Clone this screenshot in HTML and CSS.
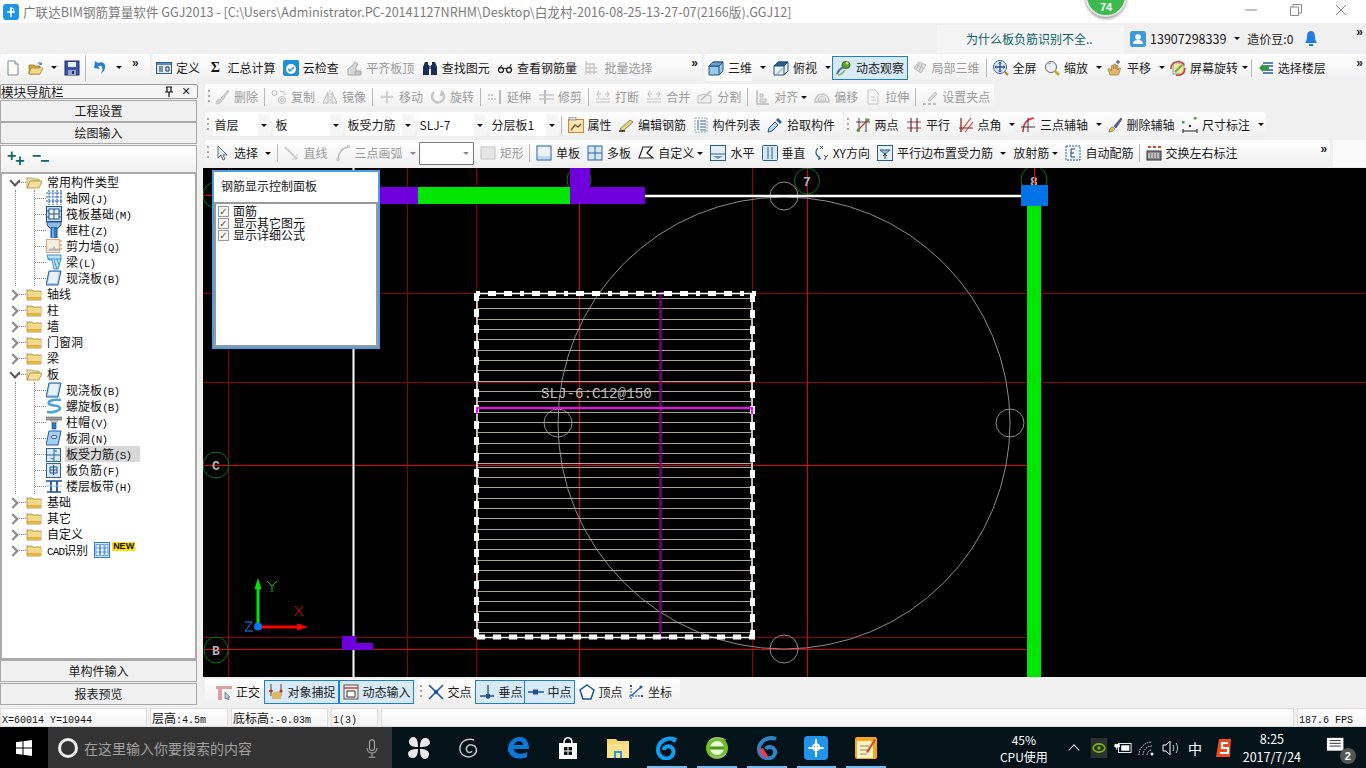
FILE: index.html
```html
<!DOCTYPE html>
<html lang="zh-CN">
<head>
<meta charset="utf-8">
<title>广联达BIM钢筋算量软件 GGJ2013</title>
<link rel="stylesheet" href="styles.css">
</head>
<body>
<svg class="defs" width="0" height="0" aria-hidden="true">
<symbol id="new" viewBox="0 0 16 16"><path d="M3 1h7l3 3v11H3z" fill="#fdfdf5" stroke="#7d8a9a"/><path d="M10 1v3h3" fill="#dfe6ee" stroke="#7d8a9a"/></symbol>
<symbol id="open" viewBox="0 0 16 16"><path d="M1 5h5l1 1h5v8H1z" fill="#d9a53e" stroke="#8a6a20" stroke-width=".7"/><path d="M3 8h12l-3 6H1z" fill="#f5d98a" stroke="#a5822f" stroke-width=".7"/><path d="M9 4c1-2 3-2 4-1l1-1v3h-3l1-1c-1-.6-2-.5-3 0z" fill="#5a86b8"/></symbol>
<symbol id="save" viewBox="0 0 16 16"><rect x="1" y="1" width="14" height="14" fill="#3d55a8" stroke="#1d2f70"/><rect x="4" y="2" width="8" height="5" fill="#e8edf6"/><rect x="4" y="10" width="8" height="5" fill="#9aa6c6"/><rect x="8" y="11" width="2" height="3" fill="#1d2f70"/></symbol>
<symbol id="undo" viewBox="0 0 16 16"><path d="M5 3c5-2 8 1 7 5-.5 2.500-2 4-4 6 1-3 2-5 1-7-.8-1.400-2.500-1.500-4-.6L7 9 1 8l1-7z" fill="#2f7fd0"/></symbol>
<symbol id="define" viewBox="0 0 16 16"><rect x=".5" y="2.500" width="15" height="11" fill="#dfe8f2" stroke="#2e5f92"/><rect x="1" y="3" width="14" height="2" fill="#5a8cc0"/><path d="M3 7h4M3 9h4M3 11h4M10 7h3v4h-3z" fill="none" stroke="#234"/></symbol>
<symbol id="cloudok" viewBox="0 0 16 16"><rect width="16" height="16" rx="2" fill="#1f8fdc"/><circle cx="8" cy="9" r="5" fill="#fff"/><path d="M5 9l2 2 4-4" fill="none" stroke="#1f8fdc" stroke-width="1.500"/></symbol>
<symbol id="align" viewBox="0 0 16 16"><path d="M2 15V9l5-4 2-3 3 2-2 3v8z" fill="#d8d8d8" stroke="#aaa"/><path d="M9 11h6v4H9z" fill="#c4c4c4" stroke="#aaa"/></symbol>
<symbol id="binoc" viewBox="0 0 16 16"><path d="M3 2h3v3h1v10H1V7zM13 2h-3v3H9v10h6V7z" fill="#1c2c5a"/><path d="M7 6h2v3H7z" fill="#6a7aa0"/></symbol>
<symbol id="glass" viewBox="0 0 16 16"><circle cx="4" cy="10" r="2.500" fill="none" stroke="#222" stroke-width="1.300"/><circle cx="12" cy="10" r="2.500" fill="none" stroke="#222" stroke-width="1.300"/><path d="M6 9c1-1 3-1 4 0M1.500 9L5 5M13 7l1-3" fill="none" stroke="#222"/></symbol>
<symbol id="batch" viewBox="0 0 16 16"><path d="M2 1v14M2 4h9M2 8h11M2 12h11M6 4v10M10 4v10" fill="none" stroke="#c6c6c6" stroke-width="1.300"/></symbol>
<symbol id="cube" viewBox="0 0 16 16"><path d="M1 6l4-4h10v9l-4 4H1z" fill="#9cc8ea" stroke="#234f7c"/><path d="M1 6h10v9M11 6l4-4" fill="none" stroke="#234f7c"/><path d="M1 6l4-4h10l-4 4z" fill="#66a2d4" stroke="#234f7c"/></symbol>
<symbol id="cubetop" viewBox="0 0 16 16"><path d="M1 6l4-4h10v9l-4 4H1z" fill="#eef5fb" stroke="#234f7c"/><path d="M1 6l4-4h10l-4 4z" fill="#2d5c92" stroke="#234f7c"/><path d="M11 6v9" stroke="#234f7c"/><path d="M4 14l6-6" stroke="#a5c8e6" stroke-width="2"/></symbol>
<symbol id="orbit" viewBox="0 0 16 16"><ellipse cx="10" cy="5" rx="4" ry="3.500" fill="#5aa02c" stroke="#2e6a10"/><circle cx="11" cy="3" r="1.500" fill="#e8f050"/><path d="M1 14C3 9 5 8 8 7" fill="none" stroke="#507090" stroke-width="2"/><path d="M2 15c3 0 5-2 7-5" fill="none" stroke="#8ab26a" stroke-width="1.500"/></symbol>
<symbol id="local3d" viewBox="0 0 16 16"><path d="M2 8l5-6 7 3-5 8z" fill="#dcdcdc" stroke="#bbb"/><path d="M5 5l6 3M7 3l-3 7M10 4l-3 7" stroke="#bbb" fill="none"/></symbol>
<symbol id="full" viewBox="0 0 16 16"><circle cx="7" cy="7" r="6.500" fill="#dfe8f4" stroke="#3a5f94"/><path d="M7 2v10M2 7h10" stroke="#234f92" stroke-width="1.300"/><path d="M5.500 3.500L7 2l1.500 1.500M5.500 10.500L7 12l1.500-1.500M3.500 5.500L2 7l1.500 1.500M10.500 5.500L12 7l-1.500 1.500" fill="none" stroke="#234f92"/><path d="M12 12l3 3" stroke="#d07010" stroke-width="2"/></symbol>
<symbol id="zoomi" viewBox="0 0 16 16"><circle cx="7" cy="7" r="5.500" fill="#edf2f7" stroke="#667"/><path d="M11 11l4 4" stroke="#d0a020" stroke-width="2.500"/><path d="M4 4l3-1" stroke="#99a" /></symbol>
<symbol id="pan" viewBox="0 0 16 16"><path d="M3 15L1 9l2-.5L4.500 11V5.500l1.500-.5.500 4 .5-5 1.500 0 .5 5 .5-4 1.500.5V10l1-2 1.500.5-1.500 5-1 1.500z" fill="#e2b767" stroke="#8c6a2a" stroke-width=".6"/><path d="M11 0v4M9 2h4" stroke="#345"/></symbol>
<symbol id="rotscr" viewBox="0 0 16 16"><rect x="3" y="3" width="11" height="11" fill="#f3e89a" stroke="#6a9fd0"/><path d="M5 12l7-7" stroke="#6aa84a" stroke-width="2"/><path d="M1 9a7 7 0 0 1 13-4M15 8a7 7 0 0 1-9 7" fill="none" stroke="#d83a2a" stroke-width="1.500"/></symbol>
<symbol id="floor" viewBox="0 0 16 16"><path d="M5 3h10M5 6h10M5 10h10M5 13h10" stroke="#2d5c9a" stroke-width="1.500"/><path d="M1 8l4-4v2h6v4H5v2z" fill="#2e9a3a"/></symbol>
<symbol id="brush" viewBox="0 0 16 16"><path d="M2 15c0-3 2-5 4-5l2 2c-1 2-3 3-6 3zM7 9l7-8 1 1-6 9z" fill="#cfcfcf" stroke="#bbb" stroke-width=".7"/></symbol>
<symbol id="copy" viewBox="0 0 16 16"><circle cx="3.500" cy="4" r="2.500" fill="none" stroke="#bbb"/><circle cx="11" cy="11" r="3.500" fill="none" stroke="#bbb"/><circle cx="11" cy="11" r="1.500" fill="none" stroke="#bbb"/><path d="M9 2l4 1 1 3" fill="none" stroke="#bbb"/></symbol>
<symbol id="mirror" viewBox="0 0 16 16"><path d="M8 1v14" stroke="#bbb" stroke-dasharray="2 1"/><path d="M6 3L1 14h5zM10 3l5 11h-5z" fill="#eee" stroke="#bbb"/></symbol>
<symbol id="move" viewBox="0 0 16 16"><path d="M8 1l2 3H9v3h3V6l3 2-3 2V9H9v3h1l-2 3-2-3h1V9H4v1L1 8l3-2v1h3V4H6z" fill="#d2d2d2"/></symbol>
<symbol id="rot" viewBox="0 0 16 16"><path d="M4 3a6 6 0 1 0 8 0l-1 4" fill="none" stroke="#c8c8c8" stroke-width="2.500"/></symbol>
<symbol id="extend" viewBox="0 0 16 16"><path d="M13 1v14" stroke="#bbb" stroke-width="2"/><path d="M1 6h6M1 10h9" stroke="#bbb" stroke-dasharray="2 1" stroke-width="1.500"/></symbol>
<symbol id="trim" viewBox="0 0 16 16"><path d="M7 1v14" stroke="#bbb" stroke-width="2"/><path d="M1 6h15M1 10h15" stroke="#c6c6c6" stroke-width="1.300"/></symbol>
<symbol id="break" viewBox="0 0 16 16"><path d="M1 13h14M1 10h14" stroke="#c6c6c6"/><path d="M2 5h4M10 5h4M4 2l-2 3 2 3M12 2l2 3-2 3" fill="none" stroke="#bbb"/></symbol>
<symbol id="split" viewBox="0 0 16 16"><path d="M1 14V7l6-2 7 2v7z" fill="#eee" stroke="#bbb"/><path d="M4 11L14 2" stroke="#bbb" stroke-width="1.500"/></symbol>
<symbol id="alignl" viewBox="0 0 16 16"><path d="M3 1v14h12" fill="none" stroke="#bbb" stroke-width="1.500"/><path d="M6 5h3v3H6zM6 10h6v3H6z" fill="#ddd" stroke="#bbb"/></symbol>
<symbol id="offset" viewBox="0 0 16 16"><path d="M1 13a7 8 0 0 1 14 0z" fill="none" stroke="#c4c4c4" stroke-width="1.500"/><path d="M4 12a4 5 0 0 1 8 0z" fill="#e0e0e0" stroke="#c4c4c4"/></symbol>
<symbol id="stretch" viewBox="0 0 16 16"><path d="M3 1h7l3 3v11H3z" fill="#f6f6f6" stroke="#c4c4c4"/><path d="M6 8h4M6 11h5" stroke="#ccc"/></symbol>
<symbol id="grip" viewBox="0 0 16 16"><path d="M6 11l7-8 2 2-7 7z" fill="#ddd" stroke="#bbb"/><path d="M1 15h3M6 15h3M11 15h3" stroke="#aaa" stroke-width="1.500"/></symbol>
<symbol id="attr" viewBox="0 0 16 16"><rect x=".5" y="2.500" width="15" height="13" fill="#fde6b8" stroke="#e0801e"/><rect x="1" y="0" width="7" height="3" fill="#dcdcdc" stroke="#666" stroke-width=".6"/><path d="M3 13l4-5 3 2 3-3" fill="none" stroke="#7a5c20" stroke-width="1.500"/></symbol>
<symbol id="edit" viewBox="0 0 16 16"><path d="M2 12L12 3l3 2L5 14z" fill="#f3d26a" stroke="#555" stroke-width=".7"/><path d="M1 14h6" stroke="#222" stroke-width="1.500"/></symbol>
<symbol id="list" viewBox="0 0 16 16"><rect x="2" y="1" width="12" height="14" fill="#fff" stroke="#8aa0b8" stroke-dasharray="2 1"/><path d="M5 3v10M7 4h6M7 7h6M7 10h6M7 13h6" stroke="#2d5c92"/></symbol>
<symbol id="pick" viewBox="0 0 16 16"><path d="M1 15l1-4 6-6 3 3-6 6z" fill="#bcd6ee" stroke="#234f92"/><path d="M9 3l2-2 4 4-2 2z" fill="#2d5c9a"/></symbol>
<symbol id="twop" viewBox="0 0 16 16"><path d="M1 5h14M4 1v14M11 1v14" stroke="#444"/><path d="M2 14L14 2" stroke="#c33" stroke-width="1.200"/><circle cx="3" cy="13" r="1.500" fill="#3a3"/><circle cx="13" cy="3" r="1.500" fill="#3a3"/></symbol>
<symbol id="para" viewBox="0 0 16 16"><path d="M1 5h14M1 11h14" stroke="#b33" stroke-width="1.200"/><path d="M5 1v14M11 1v14" stroke="#534" stroke-width="1.200"/></symbol>
<symbol id="angle" viewBox="0 0 16 16"><path d="M1 11h14M3 1v14" stroke="#722" stroke-width="1.200"/><path d="M2 15L13 1M7 15L15 5" stroke="#d33" stroke-width="1.200"/></symbol>
<symbol id="arcaux" viewBox="0 0 16 16"><path d="M3 15C3 7 7 2 14 1" fill="none" stroke="#d33" stroke-width="1.500"/><path d="M8 1v14M1 10h14" stroke="#534"/></symbol>
<symbol id="delaux" viewBox="0 0 16 16"><path d="M2 15c0-3 2-5 4-5l2 2c-1 2-3 3-6 3z" fill="#e8c04a" stroke="#555" stroke-width=".6"/><path d="M7 9l7-8 1 1-6 9z" fill="#5a5ab0" stroke="#334" stroke-width=".6"/></symbol>
<symbol id="dim" viewBox="0 0 16 16"><path d="M1 12v4M15 12v4M1 14h14" stroke="#222"/><rect x="0" y="4" width="2.500" height="2.500" fill="#3a3"/><rect x="12" y="0" width="2.500" height="2.500" fill="#3a3"/><path d="M7 8h2v2H7z" fill="#222"/></symbol>
<symbol id="cursor" viewBox="0 0 16 16"><path d="M4 1v12l3-3 2 5 2-1-2-4h4z" fill="#e6ecf6" stroke="#5a6a8a"/></symbol>
<symbol id="lineg" viewBox="0 0 16 16"><path d="M2 2l12 12" stroke="#bbb" stroke-width="1.300"/><path d="M14 9v5H9" fill="none" stroke="#c8c8c8"/></symbol>
<symbol id="arcg" viewBox="0 0 16 16"><path d="M3 15C3 8 7 3 13 2" fill="none" stroke="#bbb" stroke-width="1.300"/><rect x="1.500" y="13" width="3" height="3" fill="#ccc"/><rect x="12" y="0" width="3" height="3" fill="#ccc"/></symbol>
<symbol id="rectg" viewBox="0 0 16 16"><rect x="1" y="2" width="14" height="12" fill="#e6e6e6" stroke="#c4c4c4"/></symbol>
<symbol id="single" viewBox="0 0 16 16"><rect x="1" y="1" width="14" height="14" fill="#eaf3fb" stroke="#1f5fb4"/><rect x="2" y="11" width="12" height="3" fill="#bcd9f0"/></symbol>
<symbol id="multi" viewBox="0 0 16 16"><rect x="1" y="1" width="14" height="14" fill="#d5e7f6" stroke="#2a62a6"/><path d="M8 1v14M1 8h14" stroke="#2a62a6"/></symbol>
<symbol id="custom" viewBox="0 0 16 16"><path d="M1 13L5 2h9l-5 6 6 5z" fill="#fff" stroke="#222" stroke-width="1.200"/></symbol>
<symbol id="horiz" viewBox="0 0 16 16"><rect x=".5" y=".5" width="15" height="15" fill="#e4eff8" stroke="#2a5c96"/><path d="M1 9h14" stroke="#2a5c96"/><path d="M3 11l5 3 5-3" fill="#6a96c6"/></symbol>
<symbol id="vert" viewBox="0 0 16 16"><rect x=".5" y=".5" width="15" height="15" rx="1" fill="#d7e7f4" stroke="#2a5c96"/><path d="M6 2v12M10 2v12" stroke="#2a5c96"/></symbol>
<symbol id="xy" viewBox="0 0 16 16"><path d="M5 3c-3 3-3 7 2 10" fill="none" stroke="#2a62a6" stroke-width="1.300"/><path d="M6 11l2 3-3 1z" fill="#2a62a6"/><path d="M7 1l3 3M10 1L7 4M11 10l2 2 2-2M13 12l-1.500 3" fill="none" stroke="#222" stroke-width=".8"/></symbol>
<symbol id="paraedge" viewBox="0 0 16 16"><rect x=".5" y=".5" width="15" height="15" fill="#e4eff8" stroke="#2a5c96"/><path d="M3 5h10M3 5l5 4 5-4" fill="#9cc0e0" stroke="#2a5c96"/><path d="M8 8v6M6 11l2-2 2 2" fill="none" stroke="#234"/></symbol>
<symbol id="auto" viewBox="0 0 16 16"><rect x="1" y="1" width="14" height="14" fill="#f0f5fb" stroke="#1f5fb4" stroke-dasharray="2 1"/><path d="M10 4H6v8h4M6 8h3" fill="none" stroke="#1f3f84"/></symbol>
<symbol id="swap" viewBox="0 0 16 16"><rect x="1" y="6" width="14" height="9" fill="#888" stroke="#333"/><path d="M3 8v5M6 8v5M9 8v5M12 8v5" stroke="#eee"/><path d="M2 2h3M7 2h3M12 2h3" stroke="#c55020" stroke-width="2"/></symbol>
<symbol id="ortho" viewBox="0 0 16 16"><path d="M0 2h16v3H6v11H2V5H0z" fill="#dca0a0"/><path d="M9 8l5 5-2 .5 1 2-1 .5-1-2-2 1z" fill="#b8c4d4" stroke="#556" stroke-width=".6"/></symbol>
<symbol id="snap" viewBox="0 0 16 16"><path d="M3 0v12M13 0v12" stroke="#6a4020"/><path d="M4 15c-1-3 0-6 2-7l6-1 2 2-1 6z" fill="#dcb868"/><path d="M1 7h4" stroke="#c22" /><circle cx="3" cy="7" r="1.500" fill="#a33"/><circle cx="13" cy="7" r="1.500" fill="#a33"/></symbol>
<symbol id="dyn" viewBox="0 0 16 16"><rect x="1" y="1" width="14" height="14" fill="#eee" stroke="#555"/><path d="M1 4h14" stroke="#c44" stroke-width="1.500"/><path d="M4 7h8v6H4z" fill="#fff" stroke="#333"/></symbol>
<symbol id="cross" viewBox="0 0 16 16"><path d="M1 1c4 4 10 10 14 14M15 1C11 5 5 11 1 15" fill="none" stroke="#1f4fa0" stroke-width="1.500"/><path d="M5.500 8L8 5.500 10.500 8 8 10.500z" fill="#1f4fa0"/></symbol>
<symbol id="perp" viewBox="0 0 16 16"><path d="M9 1v14M1 12h14" stroke="#1f4fa0" stroke-width="1.300"/><rect x="7" y="10" width="4" height="4" fill="#1f4fa0"/></symbol>
<symbol id="mid" viewBox="0 0 16 16"><path d="M0 8h16" stroke="#1f4fa0" stroke-width="1.500"/><rect x="5" y="5.500" width="5" height="5" fill="#1f4fa0"/></symbol>
<symbol id="vertex" viewBox="0 0 16 16"><path d="M8 1l7 5-3 9H4L1 6z" fill="#fff" stroke="#1f4fa0" stroke-width="1.500"/></symbol>
<symbol id="coord" viewBox="0 0 16 16"><path d="M3 1v14M1 12h14" stroke="#1f5fb4" stroke-dasharray="2 1"/><path d="M3 12L13 3" stroke="#1f5fb4" stroke-width="1.300"/><circle cx="13" cy="3" r="1.500" fill="#1f5fb4"/><circle cx="3" cy="2" r="1" fill="#234"/><circle cx="14" cy="12" r="1" fill="#234"/></symbol>
<symbol id="fold" viewBox="0 0 16 16"><path d="M1 4h5l1 1h8v9H1z" fill="#f1cf73" stroke="#a98a3c" stroke-width=".8"/><path d="M2 6h13v8H2z" fill="#f6d98a"/><path d="M2 11h13v3H2z" fill="#e6b445"/></symbol>
<symbol id="foldo" viewBox="0 0 16 16"><path d="M1 4h5l1 1h6v2H4l-2 7H1z" fill="#f5e4b0" stroke="#a98a3c" stroke-width=".8"/><path d="M4 7h12l-3 7H1z" fill="#f7df9c" stroke="#a98a3c" stroke-width=".8"/></symbol>
<symbol id="grid" viewBox="0 0 16 16"><path d="M3 0v15M7 0v15M11 0v15M15 0v15M0 3h16M0 7h16M0 11h16" stroke="#2a62b0" stroke-dasharray="2 .8" stroke-width="1.100"/></symbol>
<symbol id="raft" viewBox="0 0 16 16"><rect x=".5" y=".5" width="15" height="15" fill="#cfe0f2" stroke="#1f4f94"/><rect x="3" y="3" width="10" height="10" fill="#f2f7fc" stroke="#1f4f94"/><path d="M3 8h10M8 3v10M0 5h3M0 11h3M13 5h3M13 11h3" stroke="#1f4f94"/></symbol>
<symbol id="col" viewBox="0 0 16 16"><path d="M1 0h14v3l-3 3H4L1 3z" fill="#8cbce8" stroke="#1f4f94"/><path d="M5 6h6v10H5z" fill="#2e7cc8" stroke="#1f4f94"/><path d="M7 6v10" stroke="#bde" /></symbol>
<symbol id="wall" viewBox="0 0 16 16"><rect x=".5" y="1.500" width="13" height="13" fill="#f5ede2" stroke="#e0a878"/><path d="M2 13l2-3 2 1 2-3 2 3 3-1v3z" fill="#bbb"/><path d="M14 3h2M14 7h2M14 11h2" stroke="#d86a1e"/></symbol>
<symbol id="beam" viewBox="0 0 16 16"><path d="M1 1h14v4l-3 10H8L6 6H3z" fill="#bfe3f6" stroke="#3a8fcf"/><path d="M8 6l3 9M11 5l2 6M1 5h14" stroke="#3a8fcf" fill="none"/></symbol>
<symbol id="slab" viewBox="0 0 16 16"><path d="M3 1h12l-3 14H0z" fill="#a8cff0" stroke="#1f5aa8"/><path d="M4 2h9l-2 11H2z" fill="#e8f2fb"/></symbol>
<symbol id="spiral" viewBox="0 0 16 16"><path d="M15 2C7 1 1 3 3 6c2 2 11 1 11 4s-8 5-13 4" fill="none" stroke="#49a0e4" stroke-width="2.500"/></symbol>
<symbol id="cap" viewBox="0 0 16 16"><path d="M0 3h16v3H0z" fill="#9c9c9c" stroke="#666" stroke-width=".6"/><path d="M4 6h8l-2 3H6z" fill="#ccc" stroke="#777" stroke-width=".6"/><path d="M6 9h4v6H6z" fill="#2e7cc8" stroke="#1f4f94" stroke-width=".7"/></symbol>
<symbol id="hole" viewBox="0 0 16 16"><path d="M3 1h12l-3 14H0z" fill="#a8cff0" stroke="#1f5aa8"/><ellipse cx="8" cy="7" rx="3" ry="1.500" fill="#fff" stroke="#1f5aa8"/></symbol>
<symbol id="rebar" viewBox="0 0 16 16"><rect x=".5" y="2.500" width="14" height="13" fill="#dbe9f6" stroke="#2a62a6"/><path d="M0 9h15M8 3v12" stroke="#2a62a6"/><path d="M11 5H8.500M5 12c1 2 2 1 2 0" fill="none" stroke="#1f4f94"/></symbol>
<symbol id="neg" viewBox="0 0 16 16"><rect x=".5" y="1.500" width="14" height="14" fill="#dbe9f6" stroke="#2a62a6"/><path d="M4 5v6h7V5zM7.500 3v10M4 8h7" fill="none" stroke="#1f4f94"/></symbol>
<symbol id="strip" viewBox="0 0 16 16"><path d="M0 3h16M1 14h14" stroke="#1f4f94" stroke-width="1.300"/><path d="M5 3v11M11 3v11" stroke="#2a62a6" stroke-width="2"/><path d="M0 8h16" stroke="#9cc0e4"/></symbol>
<symbol id="cadi" viewBox="0 0 16 16"><rect x=".5" y=".5" width="15" height="15" fill="#d6e9fa" stroke="#2a7cd0"/><path d="M2 2.500h3.500v11H2zM6.500 2.500H10v11H6.500zM11 2.500h3v11h-3z" fill="#fff" stroke="#2a7cd0" stroke-width=".7"/><path d="M2 6h12M2 10h12" stroke="#2a7cd0" stroke-width=".7"/></symbol>
<symbol id="gblue" viewBox="0 0 16 16"><rect width="16" height="16" rx="2.500" fill="#1f94e8"/><circle cx="8" cy="7.500" r="2" fill="none" stroke="#fff" stroke-width="1.200"/><path d="M8 2v12M3 8h10" stroke="#fff" stroke-width="1.300"/></symbol>
<symbol id="user" viewBox="0 0 16 16"><rect width="16" height="16" rx="2.500" fill="#3f9ad8"/><circle cx="8" cy="6" r="2.800" fill="#fff"/><path d="M3 13c0-3 2-4 5-4s5 1 5 4z" fill="#fff"/></symbol>
<symbol id="bell" viewBox="0 0 12 16"><path d="M6 0c3 0 4 3 4 6 0 3 1 4 2 6H0c1-2 2-3 2-6 0-3 1-6 4-6z" fill="#1f7ee0"/><path d="M4 13h4v2H4z" fill="#1f7ee0"/></symbol>
<symbol id="pin" viewBox="0 0 10 12"><path d="M2 1h6M3 1v5h4V1M1 6h8M5 6v5" fill="none" stroke="#111" stroke-width="1.200"/></symbol>
<symbol id="winlogo" viewBox="0 0 16 16"><path d="M0 2.200L6.500 1.300V7.500H0zM7.500 1.200L16 0V7.500H7.500zM0 8.500H6.500V14.700L0 13.800zM7.500 8.500H16V16L7.500 14.800z" fill="#fff"/></symbol>
<symbol id="mic" viewBox="0 0 16 24"><rect x="5" y="2" width="6" height="13" rx="3" fill="none" stroke="#aaa" stroke-width="1.300"/><path d="M2 12c0 8 12 8 12 0M8 18v5M4 23h8" fill="none" stroke="#aaa" stroke-width="1.300"/></symbol>
<symbol id="pinw" viewBox="0 0 24 24"><path d="M11 11C5 11 2 9 2 6s2-5 5-5c3 1 4 4 4 10zM13 11c0-6 2-9 5-9s5 2 5 5c-1 3-4 4-10 4zM13 13c6 0 9 2 9 5s-2 5-5 5c-3-1-4-4-4-10zM11 13c0 6-2 9-5 9s-5-2-5-5c1-3 4-4 10-4z" fill="#e8e8e8"/></symbol>
<symbol id="swirl" viewBox="0 0 24 24"><path d="M17 4C9 1 2 7 3 14c1 6 9 9 14 5 4-3 3-9-2-10-4-1-7 3-5 6 1 2 4 2 5 0" fill="none" stroke="#c4c4c4" stroke-width="1.500"/></symbol>
<symbol id="edge" viewBox="0 0 24 24"><path d="M2 12C3 5 8 1 14 1c6 0 9 5 9 12H8c0 5 8 6 13 3v5c-7 3-16 2-18-5 0 0-2 0-1-4zM8 9h9c0-5-8-5-9 0z" fill="#0a78d4"/></symbol>
<symbol id="store" viewBox="0 0 24 24"><path d="M3 7h18v16H3z" fill="#fff"/><path d="M8 7c0-7 8-7 8 0" fill="none" stroke="#fff" stroke-width="1.500"/><path d="M8 11h3.500v3.500H8zM12.500 11H16v3.500h-3.500zM8 15.500h3.500V19H8zM12.500 15.500H16V19h-3.500z" fill="#111"/></symbol>
<symbol id="expl" viewBox="0 0 24 24"><path d="M1 3h9l2 2h11v17H1z" fill="#f7d674"/><path d="M1 8h22v14H1z" fill="#fbe08e"/><path d="M8 15h8v7H8z" fill="#2a9adf"/><path d="M10 17h4v5h-4z" fill="#fbe08e"/></symbol>
<symbol id="glogo" viewBox="0 0 24 24"><path d="M21 4C13 0 3 5 3 14c0 6 6 10 11 8 5-2 6-8 2-11-3-2-7 0-7 3" fill="none" stroke="#12a0ee" stroke-width="4"/><path d="M15 4l7-2-2 5z" fill="#12a0ee"/></symbol>
<symbol id="ie" viewBox="0 0 24 24"><circle cx="12" cy="12" r="11" fill="#6ec02a"/><circle cx="12" cy="12" r="7" fill="#e9f7d4"/><path d="M5 12h14" stroke="#4a9a1a" stroke-width="3"/><path d="M5 19C9 22 18 22 21 18M4 5c5-4 12-4 17-1" fill="none" stroke="#bbb"/></symbol>
<symbol id="g2" viewBox="0 0 24 24"><path d="M21 3C13 0 4 5 4 13c0 6 5 10 11 9 5-1 7-7 3-10-3-2-6-1-7 1" fill="none" stroke="#2a86c8" stroke-width="4"/><path d="M4 13c0 6 5 9 10 9l-6-10z" fill="#e04060"/></symbol>
<symbol id="note" viewBox="0 0 24 24"><rect x="1" y="1" width="22" height="22" rx="2" fill="#f5a623"/><rect x="3" y="5" width="16" height="17" fill="#fff2c0"/><path d="M6 10h9M6 14h9M6 18h7" stroke="#887"/><path d="M12 16L20 3l2 1-8 13z" fill="#d0502a"/></symbol>
<symbol id="nv" viewBox="0 0 20 24"><rect width="20" height="24" fill="#2a2f32"/><ellipse cx="10" cy="12" rx="7" ry="5" fill="none" stroke="#76b900" stroke-width="2"/><circle cx="10" cy="12" r="2" fill="#76b900"/></symbol>
<symbol id="batt" viewBox="0 0 20 16"><rect x="5" y="3" width="14" height="10" fill="none" stroke="#fff"/><rect x="8" y="5" width="9" height="6" fill="#fff"/><path d="M1 4h5v3H1zM3 7v3" stroke="#fff" fill="#fff"/></symbol>
<symbol id="wifi" viewBox="0 0 18 16"><path d="M1 15A13 13 0 0 1 14 2M5 15A9 9 0 0 1 14 6M9 15A5 5 0 0 1 14 10" fill="none" stroke="#ddd" stroke-dasharray="1.500 1"/><circle cx="14" cy="14" r="1.500" fill="#fff"/></symbol>
<symbol id="vol" viewBox="0 0 18 16"><path d="M1 5h3l4-4v14l-4-4H1z" fill="none" stroke="#fff"/><path d="M11 5c1 2 1 4 0 6M14 3c2 3 2 7 0 10" fill="none" stroke="#ccc"/></symbol>
<symbol id="sogou" viewBox="0 0 16 20"><path d="M3 1h12v18H1z" fill="#f0471f" transform="skewX(-3)"/><path d="M12 5H6v5h6v5H4" fill="none" stroke="#fff" stroke-width="2.200"/></symbol>
<symbol id="noti" viewBox="0 0 24 24"><path d="M1 2h18v14H1z" fill="#fff"/><path d="M4 5h12M4 8h12M4 11h12" stroke="#222"/></symbol>
<symbol id="appico" viewBox="0 0 16 16"><rect width="16" height="16" rx="3" fill="#1f94e8"/><path d="M8 3v10M4 8h8" stroke="#fff" stroke-width="1.500"/><circle cx="9" cy="6" r="1.800" fill="none" stroke="#fff"/></symbol>
<symbol id="wmin" viewBox="0 0 12 12"><path d="M0 6h12" stroke="#888"/></symbol>
<symbol id="wres" viewBox="0 0 12 12"><path d="M.5 3h8v8.500h-8zM3 3V.5h8.500V9H9" fill="none" stroke="#888"/></symbol>
<symbol id="wclose" viewBox="0 0 12 12"><path d="M1 1l10 10M11 1L1 11" stroke="#888"/></symbol>
</svg>

<header class="titlebar">
  <svg class="i appicon"><use href="#appico"/></svg>
  <span class="titletext">广联达BIM钢筋算量软件 GGJ2013 - [C:\Users\Administrator.PC-20141127NRHM\Desktop\白龙村-2016-08-25-13-27-07(2166版).GGJ12]</span>
  <div class="winctl">
    <svg class="wc"><use href="#wmin"/></svg>
    <svg class="wc"><use href="#wres"/></svg>
    <svg class="wc"><use href="#wclose"/></svg>
  </div>
  <div class="badge">74</div>
</header>

<div class="menubar">
  <div class="question">为什么板负筋识别不全..</div>
  <div class="account">
    <svg class="i"><use href="#user"/></svg>
    <span class="phone">13907298339</span><span class="caret"></span>
    <span class="beans">造价豆:0</span>
    <svg class="bell"><use href="#bell"/></svg>
  </div>
  <span class="more moreend">»</span>
</div>

<div class="toolrow">
  <div class="bar bar-file">
    <svg class="i"><use href="#new"/></svg>
    <span class="t"><svg class="i"><use href="#open"/></svg></span><span class="caret"></span>
    <svg class="i"><use href="#save"/></svg>
    <span class="sep tall"></span>
    <svg class="i"><use href="#undo"/></svg><span class="caret"></span>
    <span class="more">»</span>
  </div>
  <div class="bar bar-main">
    <span class="t"><svg class="i"><use href="#define"/></svg>定义</span>
    <span class="t"><span class="sigma">Σ</span>汇总计算</span>
    <span class="t"><svg class="i"><use href="#cloudok"/></svg>云检查</span>
    <span class="t off"><svg class="i"><use href="#align"/></svg>平齐板顶</span>
    <span class="t"><svg class="i"><use href="#binoc"/></svg>查找图元</span>
    <span class="t"><svg class="i"><use href="#glass"/></svg>查看钢筋量</span>
    <span class="t off"><svg class="i"><use href="#batch"/></svg>批量选择</span>
    <span class="more">»</span>
  </div>
  <div class="bar bar-view">
    <span class="t white"><svg class="i"><use href="#cube"/></svg>三维</span><span class="caret"></span>
    <span class="t"><svg class="i"><use href="#cubetop"/></svg>俯视</span><span class="caret"></span>
    <span class="t active"><svg class="i"><use href="#orbit"/></svg>动态观察</span>
    <span class="t off"><svg class="i"><use href="#local3d"/></svg>局部三维</span>
    <span class="sep"></span>
    <span class="t"><svg class="i"><use href="#full"/></svg>全屏</span>
    <span class="t"><svg class="i"><use href="#zoomi"/></svg>缩放</span><span class="caret n"></span>
    <span class="t"><svg class="i"><use href="#pan"/></svg>平移</span><span class="caret n"></span>
    <span class="t"><svg class="i"><use href="#rotscr"/></svg>屏幕旋转</span><span class="caret tight"></span>
    <span class="sep"></span>
    <span class="t"><svg class="i"><use href="#floor"/></svg>选择楼层</span>
    <span class="more moreend">»</span>
  </div>
</div>

<div class="workspace">
  <aside class="nav">
    <div class="navhead"><span>模块导航栏</span><svg class="pin"><use href="#pin"/></svg><span class="navx">×</span></div>
    <button class="navbtn">工程设置</button>
    <button class="navbtn">绘图输入</button>
    <div class="treetools"><span class="pm">+<sub>+</sub></span><span class="pm">−<sub>−</sub></span></div>
    <div class="tree">
      <div class="node"><span class="chev open"></span><span class="dot"></span><svg class="i"><use href="#foldo"/></svg><span class="lb">常用构件类型</span></div>
      <div class="kids"><div class="kids2">
        <div class="leaf"><span class="conn"></span><svg class="i"><use href="#grid"/></svg><span class="lb">轴网<i>(J)</i></span></div>
        <div class="leaf"><span class="conn"></span><svg class="i"><use href="#raft"/></svg><span class="lb">筏板基础<i>(M)</i></span></div>
        <div class="leaf"><span class="conn"></span><svg class="i"><use href="#col"/></svg><span class="lb">框柱<i>(Z)</i></span></div>
        <div class="leaf"><span class="conn"></span><svg class="i"><use href="#wall"/></svg><span class="lb">剪力墙<i>(Q)</i></span></div>
        <div class="leaf"><span class="conn"></span><svg class="i"><use href="#beam"/></svg><span class="lb">梁<i>(L)</i></span></div>
        <div class="leaf"><span class="conn"></span><svg class="i"><use href="#slab"/></svg><span class="lb">现浇板<i>(B)</i></span></div>
      </div></div>
      <div class="node"><span class="chev"></span><span class="dot"></span><svg class="i"><use href="#fold"/></svg><span class="lb">轴线</span></div>
      <div class="node"><span class="chev"></span><span class="dot"></span><svg class="i"><use href="#fold"/></svg><span class="lb">柱</span></div>
      <div class="node"><span class="chev"></span><span class="dot"></span><svg class="i"><use href="#fold"/></svg><span class="lb">墙</span></div>
      <div class="node"><span class="chev"></span><span class="dot"></span><svg class="i"><use href="#fold"/></svg><span class="lb">门窗洞</span></div>
      <div class="node"><span class="chev"></span><span class="dot"></span><svg class="i"><use href="#fold"/></svg><span class="lb">梁</span></div>
      <div class="node"><span class="chev open"></span><span class="dot"></span><svg class="i"><use href="#foldo"/></svg><span class="lb">板</span></div>
      <div class="kids"><div class="kids2">
        <div class="leaf"><span class="conn"></span><svg class="i"><use href="#slab"/></svg><span class="lb">现浇板<i>(B)</i></span></div>
        <div class="leaf"><span class="conn"></span><svg class="i"><use href="#spiral"/></svg><span class="lb">螺旋板<i>(B)</i></span></div>
        <div class="leaf"><span class="conn"></span><svg class="i"><use href="#cap"/></svg><span class="lb">柱帽<i>(V)</i></span></div>
        <div class="leaf"><span class="conn"></span><svg class="i"><use href="#hole"/></svg><span class="lb">板洞<i>(N)</i></span></div>
        <div class="leaf sel"><span class="conn"></span><svg class="i"><use href="#rebar"/></svg><span class="lb">板受力筋<i>(S)</i></span></div>
        <div class="leaf"><span class="conn"></span><svg class="i"><use href="#neg"/></svg><span class="lb">板负筋<i>(F)</i></span></div>
        <div class="leaf"><span class="conn"></span><svg class="i"><use href="#strip"/></svg><span class="lb">楼层板带<i>(H)</i></span></div>
      </div></div>
      <div class="node"><span class="chev"></span><span class="dot"></span><svg class="i"><use href="#fold"/></svg><span class="lb">基础</span></div>
      <div class="node"><span class="chev"></span><span class="dot"></span><svg class="i"><use href="#fold"/></svg><span class="lb">其它</span></div>
      <div class="node"><span class="chev"></span><span class="dot"></span><svg class="i"><use href="#fold"/></svg><span class="lb">自定义</span></div>
      <div class="node"><span class="chev"></span><span class="dot"></span><svg class="i"><use href="#fold"/></svg><span class="lb"><i>CAD</i>识别</span><svg class="i cad"><use href="#cadi"/></svg><span class="newtag">NEW</span></div>
    </div>
    <button class="navbtn low">单构件输入</button>
    <button class="navbtn">报表预览</button>
  </aside>

  <main class="stage">
    <div class="row row-a">
      <div class="bar bar-edit off">
        <span class="handle"></span>
        <span class="t"><svg class="i"><use href="#brush"/></svg>删除</span><span class="sep"></span>
        <span class="t"><svg class="i"><use href="#copy"/></svg>复制</span>
        <span class="t"><svg class="i"><use href="#mirror"/></svg>镜像</span><span class="sep"></span>
        <span class="t"><svg class="i"><use href="#move"/></svg>移动</span>
        <span class="t"><svg class="i"><use href="#rot"/></svg>旋转</span><span class="sep"></span>
        <span class="t"><svg class="i"><use href="#extend"/></svg>延伸</span>
        <span class="t"><svg class="i"><use href="#trim"/></svg>修剪</span><span class="sep"></span>
        <span class="t"><svg class="i"><use href="#break"/></svg>打断</span>
        <span class="t"><svg class="i"><use href="#break"/></svg>合并</span>
        <span class="t"><svg class="i"><use href="#split"/></svg>分割</span><span class="sep"></span>
        <span class="t"><svg class="i"><use href="#alignl"/></svg>对齐</span><span class="caret tight"></span>
        <span class="t"><svg class="i"><use href="#offset"/></svg>偏移</span>
        <span class="t"><svg class="i"><use href="#stretch"/></svg>拉伸</span><span class="sep"></span>
        <span class="t"><svg class="i"><use href="#grip"/></svg>设置夹点</span>
      </div>
    </div>
    <div class="row row-b">
      <div class="bar bar-prop">
        <span class="handle"></span>
        <div class="combos">
          <span class="combo wide1">首层</span>
          <span class="combo">板</span>
          <span class="combo">板受力筋</span>
          <span class="combo">SLJ-7</span>
          <span class="combo">分层板1</span>
        </div>
        <span class="sep"></span>
        <span class="t"><svg class="i"><use href="#attr"/></svg>属性</span>
        <span class="t"><svg class="i"><use href="#edit"/></svg>编辑钢筋</span>
        <span class="t"><svg class="i"><use href="#list"/></svg>构件列表</span>
        <span class="t"><svg class="i"><use href="#pick"/></svg>拾取构件</span>
      </div>
      <div class="bar bar-aux">
        <span class="handle"></span>
        <span class="t"><svg class="i"><use href="#twop"/></svg>两点</span>
        <span class="t"><svg class="i"><use href="#para"/></svg>平行</span>
        <span class="t"><svg class="i"><use href="#angle"/></svg>点角</span><span class="caret"></span>
        <span class="t"><svg class="i"><use href="#arcaux"/></svg>三点辅轴</span><span class="caret"></span>
        <span class="t"><svg class="i"><use href="#delaux"/></svg>删除辅轴</span>
        <span class="t"><svg class="i"><use href="#dim"/></svg>尺寸标注</span><span class="caret"></span>
      </div>
    </div>
    <div class="row row-c">
      <div class="bar bar-draw">
        <span class="handle"></span>
        <span class="t"><svg class="i"><use href="#cursor"/></svg>选择</span><span class="caret"></span>
        <span class="sep"></span>
        <span class="t off"><svg class="i"><use href="#lineg"/></svg>直线</span>
        <span class="t off"><svg class="i"><use href="#arcg"/></svg>三点画弧</span><span class="caret gray"></span>
        <span class="drop"><span class="caret gray"></span></span>
        <span class="t off"><svg class="i"><use href="#rectg"/></svg>矩形</span>
        <span class="sep"></span>
        <span class="t"><svg class="i"><use href="#single"/></svg>单板</span>
        <span class="t"><svg class="i"><use href="#multi"/></svg>多板</span>
        <span class="t"><svg class="i"><use href="#custom"/></svg>自定义</span><span class="caret tight"></span>
        <span class="t"><svg class="i"><use href="#horiz"/></svg>水平</span>
        <span class="t"><svg class="i"><use href="#vert"/></svg>垂直</span>
        <span class="t"><svg class="i"><use href="#xy"/></svg>XY方向</span>
        <span class="t"><svg class="i"><use href="#paraedge"/></svg>平行边布置受力筋</span><span class="caret"></span>
        <span class="t">放射筋</span><span class="caret tight"></span>
        <span class="t"><svg class="i"><use href="#auto"/></svg>自动配筋</span>
        <span class="sep"></span>
        <span class="t"><svg class="i"><use href="#swap"/></svg>交换左右标注</span>
        <span class="more drawmore">»</span>
      </div>
      <div class="endgrip"><span class="handle"></span></div>
    </div>

    <div class="canvas">
      <svg class="cad-view" width="1163" height="509" viewBox="203 168 1163 509">
        <rect x="203" y="168" width="1163" height="509" fill="#000"/>
        <g stroke="#8f0000" fill="none">
          <path d="M228.500 168V677M407.500 168V677M476.500 168V677M752.500 168V677"/>
          <path d="M203 293.500H1366M203 382.500H1366M203 637.500H1027"/>
        </g>
        <g stroke="#e00000" fill="none">
          <path d="M579.500 168V677M807.500 168V677"/>
          <path d="M203 195.500H260M203 465.500H1027M203 649.500H1027"/>
        </g>
        <g stroke="#0a7a0a" fill="none">
          <circle cx="216" cy="195" r="13"/>
          <circle cx="216" cy="465" r="13"/>
          <ellipse cx="216" cy="650" rx="12" ry="13"/>
          <ellipse cx="579" cy="180" rx="12" ry="13"/>
          <ellipse cx="807" cy="181" rx="12.500" ry="13"/>
          <ellipse cx="1034" cy="180" rx="13" ry="14"/>
        </g>
        <g class="bubble">
          <text x="216" y="470">C</text>
          <text x="216" y="655">B</text>
          <text x="807" y="186">7</text>
          <text x="1034" y="186">8</text>
        </g>
        <path d="M1034.500 168V206" stroke="#f00000"/>
        <g stroke="#8c8c8c" fill="none">
          <circle cx="784" cy="423" r="226"/>
          <circle cx="784" cy="196" r="14"/>
          <circle cx="784" cy="649" r="14"/>
          <circle cx="558" cy="423" r="14"/>
          <circle cx="1010" cy="423" r="14"/>
        </g>
        <path d="M353.500 168V677" stroke="#fff" stroke-width="2"/>
        <path d="M645 196H1021" stroke="#fff" stroke-width="2.500"/>
        <rect x="380" y="187" width="38" height="17" fill="#6f00dc"/>
        <rect x="418" y="187" width="152" height="17" fill="#00e600"/>
        <path d="M570 168H590V187H645V204H570z" fill="#6f00dc"/>
        <rect x="1027" y="206" width="14" height="471" fill="#00e600"/>
        <rect x="1021" y="185" width="27" height="21" fill="#0073e6"/>
        <path d="M342 636H356V643H373V650H342z" fill="#6f00dc"/>
        <path stroke="#b0a39c" d="M478 298.500H751M478 308.500H751M478 319.500H751M478 329.500H751M478 339.500H751M478 350.500H751M478 360.500H751M478 370.500H751M478 381.500H751M478 391.500H751M478 401.500H751M478 412.500H751M478 422.500H751M478 432.500H751M478 443.500H751M478 453.500H751M478 463.500H751M478 467.500H751M478 477.500H751M478 487.500H751M478 498.500H751M478 508.500H751M478 518.500H751M478 529.500H751M478 539.500H751M478 549.500H751M478 560.500H751M478 570.500H751M478 580.500H751M478 591.500H751M478 601.500H751M478 611.500H751M478 622.500H751M478 632.500H751"/>
        <path d="M660.500 293V638" stroke="#8a008a" stroke-width="2"/>
        <path d="M660 638H667M660 293H664" stroke="#8a008a" stroke-width="2"/>
        <rect x="477" y="293.500" width="275" height="344" fill="none" stroke="#fff" stroke-width="1.500"/>
        <path d="M476 293.500H756" stroke="#fff" stroke-width="5" stroke-dasharray="4 8 8 8 8 8" fill="none"/>
        <path d="M477 637H755" stroke="#fff" stroke-width="5" stroke-dasharray="8 8" fill="none"/>
        <path d="M476.500 293V638" stroke="#fff" stroke-width="5" stroke-dasharray="8 8" fill="none"/>
        <path d="M752.500 294V640" stroke="#fff" stroke-width="5" stroke-dasharray="8 8" fill="none"/>
        <path d="M477 414V408H752V414" stroke="#ff00ff" stroke-width="2" fill="none"/>
        <text x="541" y="398" class="slj">SLJ-6:C12@150</text>
        <path d="M258 626V586" stroke="#00e600" stroke-width="3"/>
        <path d="M258 578l3.500 11h-7z" fill="#00e600"/>
        <path d="M258 627H298" stroke="#f00" stroke-width="3"/>
        <path d="M308 627l-11-3.500v7z" fill="#f00"/>
        <circle cx="258" cy="626.500" r="4" fill="#0a78f0"/>
        <path d="M267 581l5 5 5-5M272 586v6" stroke="#00d000" fill="none"/>
        <path d="M295 606l8 10M303 606l-8 10" stroke="#e00" fill="none"/>
        <path d="M245 622h7l-7 9h8" stroke="#2a80f0" fill="none"/>
      </svg>
      <section class="rebarpanel">
        <div class="ptitle">钢筋显示控制面板</div>
        <div class="plist">
          <label class="chk"><span class="box">✓</span>面筋</label>
          <label class="chk"><span class="box">✓</span>显示其它图元</label>
          <label class="chk"><span class="box">✓</span>显示详细公式</label>
        </div>
      </section>
    </div>

    <div class="row row-d">
      <div class="bar bar-snap1">
        <span class="t"><svg class="i"><use href="#ortho"/></svg>正交</span>
        <span class="t active"><svg class="i"><use href="#snap"/></svg>对象捕捉</span>
        <span class="t active"><svg class="i"><use href="#dyn"/></svg>动态输入</span>
      </div>
      <div class="bar bar-snap2">
        <span class="handle"></span>
        <span class="t"><svg class="i"><use href="#cross"/></svg>交点</span>
        <span class="t active"><svg class="i"><use href="#perp"/></svg>垂点</span>
        <span class="t active"><svg class="i"><use href="#mid"/></svg>中点</span>
        <span class="t"><svg class="i"><use href="#vertex"/></svg>顶点</span>
        <span class="t"><svg class="i"><use href="#coord"/></svg>坐标</span>
      </div>
    </div>
  </main>
</div>

<footer class="status">
  <span class="cell c1"><i>X=60014 Y=10944</i></span>
  <span class="cell c2">层高<i>:4.5m</i></span>
  <span class="cell c3">底标高<i>:-0.03m</i></span>
  <span class="cell c4"><i>1(3)</i></span>
  <span class="cell c5"></span>
  <span class="cell c6"><i>187.6 FPS</i></span>
</footer>

<nav class="taskbar">
  <div class="start"><svg class="winlogo"><use href="#winlogo"/></svg></div>
  <div class="search">
    <span class="cortana"></span>
    <span class="searchtext">在这里输入你要搜索的内容</span>
    <svg class="mic"><use href="#mic"/></svg>
  </div>
  <div class="apps">
    <span class="app"><svg class="ai"><use href="#pinw"/></svg></span>
    <span class="app"><svg class="ai"><use href="#swirl"/></svg></span>
    <span class="app"><svg class="ai"><use href="#edge"/></svg></span>
    <span class="app"><svg class="ai"><use href="#store"/></svg></span>
    <span class="app"><svg class="ai"><use href="#expl"/></svg></span>
    <span class="app on"><svg class="ai"><use href="#glogo"/></svg></span>
    <span class="app on"><svg class="ai"><use href="#ie"/></svg></span>
    <span class="app on"><svg class="ai"><use href="#g2"/></svg></span>
    <span class="app on"><svg class="ai"><use href="#gblue"/></svg></span>
    <span class="app on"><svg class="ai"><use href="#note"/></svg></span>
  </div>
  <div class="cpu"><span>45%</span><span>CPU使用</span></div>
  <div class="tray">
    <span class="chevup"></span>
    <svg class="tr"><use href="#nv"/></svg>
    <svg class="tr"><use href="#batt"/></svg>
    <svg class="tr"><use href="#wifi"/></svg>
    <svg class="tr"><use href="#vol"/></svg>
    <span class="ime">中</span>
    <svg class="tr sg"><use href="#sogou"/></svg>
  </div>
  <div class="clock"><span>8:25</span><span>2017/7/24</span></div>
  <div class="notify"><svg class="ai small"><use href="#noti"/></svg><span class="count">2</span></div>
</nav>
</body>
</html>
```

FILE: styles.css
```css
* { box-sizing: border-box; }
html, body { margin: 0; padding: 0; }
body {
  width: 1366px; height: 768px; overflow: hidden; background: #f0f0f0; color: #1a1a1a;
  font: 12px/16px "Noto Sans CJK SC", "Liberation Sans", sans-serif;
  display: flex; flex-direction: column; position: relative;
}
.defs { position: absolute; }
.i { width: 16px; height: 16px; flex: none; display: block; }

/* title */
.titlebar { height: 23px; flex: none; background: #fff; display: flex; align-items: center; padding-left: 3px; position: relative; }
.appicon { margin-right: 4px; }
.titletext { color: #7a7a7a; font-size: 12.600px; white-space: nowrap; }
.winctl { margin-left: auto; display: flex; gap: 33px; margin-right: 19px; padding-bottom: 3px; }
.wc { width: 12px; height: 12px; display: block; }
.badge {
  position: absolute; left: 1085px; top: -25px; width: 42px; height: 42px; border-radius: 50%;
  background: #3cba4e; border: 2px solid #e6e6e6; box-shadow: 0 2px 3px rgba(0,0,0,.35);
  color: #fff; font: bold 11px/13px "Liberation Sans", sans-serif; text-align: center; padding-top: 24px;
}

/* menu row */
.menubar { height: 31px; flex: none; display: flex; align-items: center; padding-left: 937px; }
.question { width: 187px; height: 28px; background: #f5f5f5; color: #0a5f6a; line-height: 28px; padding-left: 29px; font-size: 12px; }
.account { display: flex; align-items: center; margin-left: 6px; height: 28px; }
.phone { margin-left: 4px; font-size: 12.500px; }
.account .caret { margin: 0 7px 0 8px; }
.beans { font-size: 12px; }
.bell { width: 12px; height: 16px; margin-left: 12px; }

/* toolbars */
.toolrow { height: 28px; flex: none; display: flex; gap: 2px; margin-bottom: 2px; }
.bar {
  display: flex; align-items: center; gap: 7.500px; height: 100%; white-space: nowrap;
  background: linear-gradient(#fff, #f4f4f4 70%, #efefef); border-radius: 3px; padding-bottom: 1px;
}
.row-a .bar { padding-bottom: 0; }
.t { display: flex; align-items: center; gap: 4px; }
.off { color: #9b9b9b; }
.caret { width: 0; height: 0; border: 3px solid transparent; border-top: 3px solid #111; border-bottom: 0; flex: none; }
.caret.tight { margin-left: -4px; }
.caret.gray { border-top-color: #888; }
.sep { width: 1px; height: 18px; background: #b8b8b8; flex: none; margin: 0 -1px; }
.sep.tall { height: 26px; }
.more { font: bold 12px/10px "Liberation Sans", sans-serif; color: #222; align-self: flex-start; margin-top: 4px; }
.handle { width: 2px; height: 14px; flex: none; background: repeating-linear-gradient(#a8a8a8 0 2px, transparent 2px 5px); }
.bar-file { width: 150px; padding-left: 5px; gap: 7px; }
.bar-file .sep { margin: 0 0 0 -2px; }
.bar-file .more { margin-left: 3px; }
.bar-main { width: 550px; padding-left: 4px; gap: 7.400px; }
.bar-main .more { margin-left: auto; margin-right: 4px; }
.bar-view { flex: 1; padding-left: 2px; position: relative; }
.bar-view .sep { margin: 0 -1.500px; }
.bar-view .caret.n { margin-right: -2px; }
.bar-view .caret.tight { margin-right: -3px; }
.moreend { margin-left: auto; margin-right: 3px; }
.sigma { width: 16px; font: bold 14px/16px "Liberation Serif", serif; text-align: center; color: #111; }
.white { background: #fff; height: 26px; padding-left: 2px; }
.active { background: #d8e9f7; border: 1px solid #1c7fd0; height: 24px; padding: 0 2.500px; }
.bar-view .active { margin: 0 -4px 0 -6px; padding: 0 3px; }

/* workspace */
.workspace { height: 624px; flex: none; display: flex; }
.nav { width: 198px; margin-right: 5px; flex: none; display: flex; flex-direction: column; }
.navhead {
  height: 15px; flex: none; border: 1px solid #999; border-radius: 2px; display: flex; align-items: center;
  line-height: 13px; background: #f5f5f5; margin-bottom: 1px; font-size: 12.500px;
}
.pin { width: 10px; height: 12px; margin-left: auto; }
.navx { width: 22px; text-align: center; font: 14px/13px "Liberation Sans", sans-serif; margin-left: 1px; }
.navbtn {
  height: 22px; flex: none; display: block; width: 197px; padding: 0; background: #f0f0f0; color: #1a1a1a;
  border: 1px solid #aaa; font: inherit; text-align: center; line-height: 20px; margin-bottom: 0;
}
.navbtn.low { margin-bottom: 1px; }
.treetools { height: 27px; width: 197px; flex: none; margin-top: 1px; background: linear-gradient(#fff, #f0f0f0); border: 1px solid #aaa; border-bottom: 0; display: flex; gap: 8px; padding-left: 6px; }
.pm { color: #0b6a6a; font: bold 16px/16px "Liberation Sans", sans-serif; margin-top: 2px; letter-spacing: -1px; }
.pm sub { font-size: 16px; vertical-align: -5px; line-height: 0; }
.tree { height: 488px; width: 197px; flex: none; background: #fff; border: 2px solid #aaa; padding-top: 0; overflow: hidden; }
.node, .leaf { height: 16px; display: flex; align-items: center; }
.node { padding-left: 7px; }
.chev { width: 10px; height: 8px; flex: none; position: relative; }
.chev::before { content: ""; display: block; width: 6px; height: 6px; border: solid #888; border-width: 2px 2px 0 0; transform: rotate(45deg); margin-top: 1px; }
.chev.open::before { border-color: #555; transform: rotate(135deg); margin-top: -1px; margin-left: 2px; }
.dot { width: 7px; border-bottom: 1px dotted #888; flex: none; }
.node .lb { margin-left: 5px; }
.lb { white-space: nowrap; color: #111; }
.lb i { font: 11px "Liberation Mono", monospace; letter-spacing: -.9px; }
.kids { margin-left: 13px; border-left: 1px dotted #888; }
.kids2 { margin-left: 18px; border-left: 1px dotted #888; }
.conn { width: 11px; border-bottom: 1px dotted #888; flex: none; }
.leaf .lb { margin-left: 3px; padding: 0 1px; }
.leaf.sel .lb { background: #d8d8d8; width: 75px; height: 16px; }
.cad { margin-left: 6px; }
.newtag { font: bold 9px/9px "Liberation Sans", sans-serif; color: #111; background: #ffe000; margin: -8px 0 0 2px; padding: 0 1px; }

.stage { flex: 1; min-width: 0; display: flex; flex-direction: column; }
.row { flex: none; display: flex; }
.row-a { height: 27px; padding: 0 0 1px 2px; }
.row-b { height: 28px; padding: 1px 0 1px 2px; }
.row-c { height: 29px; padding: 1px 0 1px 2px; }
.row-d { height: 31px; padding: 2px 0 3px 2px; gap: 4px; }
.bar-edit { width: 789px; padding-left: 3px; gap: 7px; }
.bar-edit .handle { margin-right: -3px; }
.bar-draw .handle { margin-right: -2px; }
.bar-prop { width: 638px; padding-left: 2px; gap: 6.500px; }
.bar-prop .handle { margin-right: -3px; }
.bar-prop .sep { margin: 0 -1px 0 -3px; }
.bar-aux { width: 422px; padding-left: 3px; margin-left: 1px; }
.bar-aux .handle { margin-right: -2px; }
.bar-aux .caret { margin-right: -2.500px; }
.combos { display: flex; gap: 4px; }
.combo { width: 68px; height: 22px; background: #fff; line-height: 22px; padding-left: 2px; position: relative; }
.combo.wide1 { width: 57px; }
.combo::after { content: ""; position: absolute; right: 0; top: 0; width: 12px; height: 22px; background: #f6f6f6; }
.combo::before { content: ""; position: absolute; right: 3px; top: 10px; z-index: 1; border: 3px solid transparent; border-top-color: #111; border-bottom: 0; }
.bar-draw { width: 1128px; padding-left: 2px; gap: 7.100px; }
.bar-draw .sep { margin: 0 -1.500px; }
.bar-draw > .caret.gray { margin-right: -4px; }
.drop { width: 55px; height: 23px; border: 1px solid #777; background: #fff; border-radius: 1px; display: flex; align-items: center; justify-content: flex-end; padding-right: 4px; flex: none; margin-right: -1px; }
.drawmore { margin-left: auto; margin-right: 3px; }
.endgrip { width: 33px; margin-left: 3px; height: 100%; background: #fafafa; padding: 7px 0 0 3px; }
.canvas { height: 509px; flex: none; position: relative; }
.cad-view { display: block; }
.bubble text { font: bold 13px "Liberation Mono", monospace; fill: #b4b4b4; text-anchor: middle; }
.slj { font: 14.200px "Liberation Mono", monospace; fill: #bcbcbc; }

.rebarpanel { position: absolute; left: 9px; top: 2px; width: 168px; height: 179px; background: #fff; border: 2px solid #4b9fe6; }
.ptitle { height: 30px; padding-left: 7px; line-height: 28px; color: #222; }
.plist { height: 145px; border: 2px solid #999; padding: 1px 0 0 2px; background: #fff; }
.chk { display: flex; align-items: center; height: 12px; gap: 4px; line-height: 12px; font-size: 12px; color: #111; }
.box { width: 11px; height: 11px; border: 1px solid #999; background: #f4f4f4; font: 10px/10px "DejaVu Sans", sans-serif; color: #555; text-align: center; flex: none; }

.bar-snap1 { width: 209px; padding-left: 11px; gap: 4px; }
.bar-snap1 .active { margin: 0; }
.bar-snap1 .active + .active { margin-left: -4px; }
.bar-snap2 { width: 262px; padding-left: 2px; gap: 5.500px; }
.bar-snap2 .active { margin: 0 -2px; padding: 0 2.500px; }
.bar-snap2 .active + .active { margin-left: -5.500px; }

/* status */
.status { height: 19px; flex: none; display: flex; gap: 3px; background: #f0f0f0; }
.cell { height: 19px; background: linear-gradient(#fff, #f4f4f4); border: 1px solid #ddd; padding-left: 1px; line-height: 17px; white-space: nowrap; flex: none; color: #111; }
.cell i { font: 10px "Liberation Mono", monospace; }
.c1 { width: 147px; } .c2 { width: 78px; } .c3 { width: 97px; } .c4 { width: 47px; } .c5 { width: 913px; } .c6 { width: 70px; }

/* taskbar */
.taskbar { height: 41px; flex: none; background: #04121a; color: #fff; display: flex; align-items: center; }
.start { width: 48px; height: 100%; background: #000; display: flex; align-items: center; justify-content: center; }
.winlogo { width: 16px; height: 16px; }
.search { width: 344px; height: 100%; background: #333; display: flex; align-items: center; padding-left: 10px; }
.cortana { width: 20px; height: 20px; border: 3px solid #eee; border-radius: 50%; flex: none; }
.searchtext { color: #a0a0a0; margin-left: 6px; font-size: 14px; }
.mic { width: 14px; height: 20px; margin-left: auto; margin-right: 13px; }
.apps { display: flex; height: 100%; padding-left: 2px; }
.app { width: 49.700px; height: 100%; display: flex; align-items: center; justify-content: center; position: relative; }
.app.on::after { content: ""; position: absolute; left: 5px; right: 5px; bottom: 0; height: 2px; background: #76b9ed; }
.ai { width: 24px; height: 24px; display: block; }
.cpu { width: 70px; margin-left: 98px; display: flex; flex-direction: column; align-items: center; line-height: 17px; font-size: 12px; }
.tray { display: flex; align-items: center; margin-left: 5px; gap: 6px; }
.chevup { width: 8px; height: 8px; border: solid #ddd; border-width: 1.500px 0 0 1.500px; transform: rotate(45deg); margin: 5px 6px 0 6px; }
.tr { width: 18px; height: 20px; display: block; }
.tr.sg { margin-left: 5px; }
.ime { width: 18px; text-align: center; font-size: 14px; }
.clock { width: 70px; margin-left: 4px; display: flex; flex-direction: column; align-items: center; line-height: 18px; font-size: 12.500px; }
.notify { margin-left: 19px; width: 24px; height: 24px; position: relative; }
.small { width: 22px; height: 22px; }
.count { position: absolute; right: -6px; bottom: -4px; width: 16px; height: 16px; border-radius: 50%; background: #555; color: #fff; font: bold 11px/16px "Liberation Sans", sans-serif; text-align: center; }
```
